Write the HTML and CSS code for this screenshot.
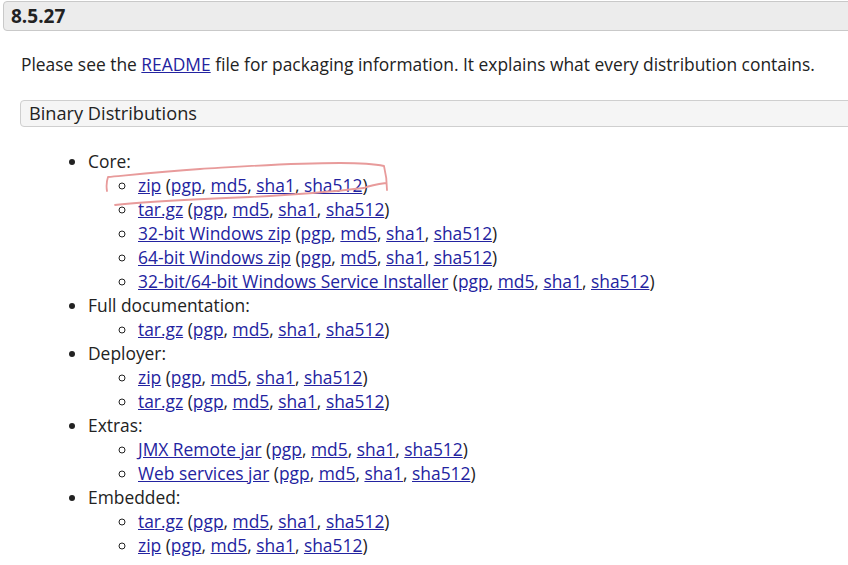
FILE: index.html
```html
<!DOCTYPE html>
<html>
<head>
<meta charset="utf-8">
<link rel="stylesheet" href="styles.css">
</head>
<body>
<div class="page">
  <h3 class="version">8.5.27</h3>
  <div class="section">
    <p class="intro">Please see the <a href="#">README</a> file for packaging information. It explains what every distribution contains.</p>
    <h4 class="sub">Binary Distributions</h4>
    <ul class="dist">
      <li>Core:
        <ul>
          <li><a href="#">zip</a> (<a href="#">pgp</a>, <a href="#">md5</a>, <a href="#">sha1</a>, <a href="#">sha512</a>)</li>
          <li><a href="#">tar.gz</a> (<a href="#">pgp</a>, <a href="#">md5</a>, <a href="#">sha1</a>, <a href="#">sha512</a>)</li>
          <li><a href="#">32-bit Windows zip</a> (<a href="#">pgp</a>, <a href="#">md5</a>, <a href="#">sha1</a>, <a href="#">sha512</a>)</li>
          <li><a href="#">64-bit Windows zip</a> (<a href="#">pgp</a>, <a href="#">md5</a>, <a href="#">sha1</a>, <a href="#">sha512</a>)</li>
          <li><a href="#">32-bit/64-bit Windows Service Installer</a> (<a href="#">pgp</a>, <a href="#">md5</a>, <a href="#">sha1</a>, <a href="#">sha512</a>)</li>
        </ul>
      </li>
      <li>Full documentation:
        <ul>
          <li><a href="#">tar.gz</a> (<a href="#">pgp</a>, <a href="#">md5</a>, <a href="#">sha1</a>, <a href="#">sha512</a>)</li>
        </ul>
      </li>
      <li>Deployer:
        <ul>
          <li><a href="#">zip</a> (<a href="#">pgp</a>, <a href="#">md5</a>, <a href="#">sha1</a>, <a href="#">sha512</a>)</li>
          <li><a href="#">tar.gz</a> (<a href="#">pgp</a>, <a href="#">md5</a>, <a href="#">sha1</a>, <a href="#">sha512</a>)</li>
        </ul>
      </li>
      <li>Extras:
        <ul>
          <li><a href="#">JMX Remote jar</a> (<a href="#">pgp</a>, <a href="#">md5</a>, <a href="#">sha1</a>, <a href="#">sha512</a>)</li>
          <li><a href="#">Web services jar</a> (<a href="#">pgp</a>, <a href="#">md5</a>, <a href="#">sha1</a>, <a href="#">sha512</a>)</li>
        </ul>
      </li>
      <li>Embedded:
        <ul>
          <li><a href="#">tar.gz</a> (<a href="#">pgp</a>, <a href="#">md5</a>, <a href="#">sha1</a>, <a href="#">sha512</a>)</li>
          <li><a href="#">zip</a> (<a href="#">pgp</a>, <a href="#">md5</a>, <a href="#">sha1</a>, <a href="#">sha512</a>)</li>
        </ul>
      </li>
    </ul>
  </div>
</div>
<svg class="scribble" width="848" height="565" viewBox="0 0 848 565">
  <path d="M107 191 C106 185 107 180 108 177 C130 175 160 172 200 169 C250 166 290 163 340 163 C360 163 375 164 384 166 C386 174 387 182 387 190 M386 183 C378 184 371 185 364 188 M115 205 C150 201 200 199 250 197 C290 195 330 192 364 188" fill="none" stroke="#e89b9b" stroke-width="1.8" stroke-linecap="round" stroke-linejoin="round"/>
</svg>
</body>
</html>
```

FILE: styles.css
```css
html, body {
  margin: 0;
  padding: 0;
  background: #fff;
  overflow: hidden;
}
body {
  font-family: "Open Sans", "Noto Sans", sans-serif;
  font-size: 17.4px;
  color: #222;
  position: relative;
  width: 848px;
  height: 565px;
}
.page {
  width: 900px;
  padding-left: 3px;
}
.version {
  margin: 1px 0 0 0;
  height: 30px;
  box-sizing: border-box;
  padding: 0 7px;
  line-height: 28px;
  font-size: 19px;
  font-weight: 700;
  background: #ececec;
  border: 1px solid #c9c9c9;
  border-radius: 4px;
}
.section {
  padding-left: 17px;
}
.intro {
  margin: 19px 0 0 1px;
  line-height: 28px;
}
a {
  color: #2323a0;
  text-decoration: underline;
}
.sub {
  margin: 22px 0 0 0;
  height: 27px;
  box-sizing: border-box;
  padding: 0 8px;
  line-height: 25px;
  font-size: 18.2px;
  font-weight: 400;
  background: #f5f5f5;
  border: 1px solid #cfcfcf;
  border-radius: 4px;
}
.dist {
  margin: 22px 0 0 0;
  padding-left: 68px;
  line-height: 24px;
  list-style: disc;
}
.dist ul {
  margin: 0;
  padding-left: 50px;
  list-style: circle;
}
.scribble {
  position: absolute;
  left: 0;
  top: 0;
  pointer-events: none;
}
```
